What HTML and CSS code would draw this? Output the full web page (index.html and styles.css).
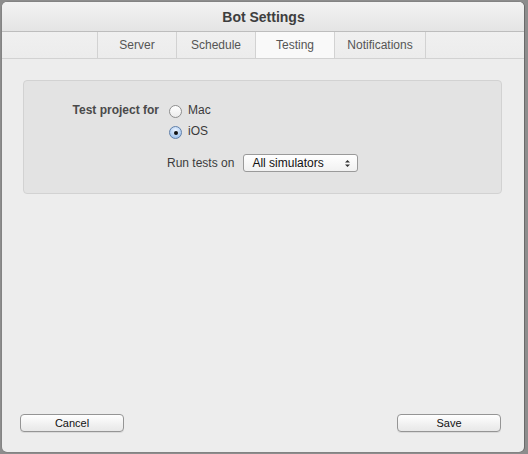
FILE: index.html
```html
<!DOCTYPE html>
<html>
<head>
<meta charset="utf-8">
<link rel="stylesheet" href="styles.css">
</head>
<body>
<div class="window">
  <div class="titlebar">Bot Settings</div>
  <div class="tabbar">
    <div class="tabs">
      <div class="tab">Server</div>
      <div class="tab">Schedule</div>
      <div class="tab active">Testing</div>
      <div class="tab wide">Notifications</div>
    </div>
  </div>
  <div class="content">
    <div class="group">
      <div class="row row-first">
        <div class="label">Test project for</div>
        <div class="radio"></div>
        <div class="opt">Mac</div>
      </div>
      <div class="row row-second">
        <div class="radio checked"><span class="dot"></span></div>
        <div class="opt">iOS</div>
      </div>
      <div class="row row-third">
        <div class="plain">Run tests on</div>
        <div class="popup">
          <span>All simulators</span>
          <svg class="arrows" width="7" height="9" viewBox="0 0 7 9"><path d="M1 3.5 L3.5 1 L6 3.5 Z M1 5.5 L3.5 8 L6 5.5 Z" fill="#333"/></svg>
        </div>
      </div>
    </div>
    <div class="footer">
      <button class="btn">Cancel</button>
      <button class="btn">Save</button>
    </div>
  </div>
</div>
</body>
</html>
```
FILE: styles.css
```css
html, body {
  margin: 0;
  padding: 0;
}
body {
  background: #8d8d8d;
  width: 528px;
  height: 454px;
  overflow: hidden;
  font-family: "Liberation Sans", Arial, sans-serif;
}
.window {
  box-sizing: border-box;
  margin: 2px 0 0 2px;
  width: 522px;
  height: 450px;
  background: #ededed;
  border-radius: 5px;
  overflow: hidden;
  display: flex;
  flex-direction: column;
  box-shadow: 1px 0 0 #6a6a6a, 0 0 0 0.5px #7a7a7a;
}
.titlebar {
  height: 29px;
  border-bottom: 1px solid #bdbdbd;
  background: linear-gradient(#f3f3f3, #e4e4e4);
  display: flex;
  align-items: center;
  justify-content: center;
  font-weight: bold;
  font-size: 14px;
  color: #3e3e3e;
  padding-left: 1px;
}
.tabbar {
  height: 26px;
  border-bottom: 1px solid #d2d2d2;
  background: linear-gradient(#f0f0f0, #ececec);
  display: flex;
  padding-left: 95px;
}
.tabs {
  display: flex;
  border-left: 1px solid #d2d2d2;
}
.tab {
  width: 78px;
  border-right: 1px solid #d2d2d2;
  display: flex;
  align-items: center;
  justify-content: center;
  font-size: 12px;
  color: #555555;
}
.tab.wide {
  width: 90px;
}
.tab.active {
  background: #f9f9f9;
}
.content {
  flex: 1;
  display: flex;
  flex-direction: column;
  padding: 21px 22px 20px 21px;
}
.group {
  box-sizing: border-box;
  height: 114px;
  background: #e3e3e3;
  border: 1px solid #d2d2d2;
  border-radius: 4px;
  padding-top: 24px;
}
.row {
  display: flex;
  align-items: center;
  font-size: 12px;
  color: #3c3c3c;
}
.row-first {
  height: 13px;
}
.row-second {
  height: 13px;
  margin-top: 8px;
  padding-left: 145px;
}
.row-third {
  height: 18px;
  margin-top: 15px;
  padding-left: 143px;
}
.label {
  width: 135px;
  text-align: right;
  font-weight: bold;
  color: #4a4a4a;
  margin-right: 10px;
  padding-bottom: 3px;
}
.radio {
  box-sizing: border-box;
  width: 13px;
  height: 13px;
  border-radius: 50%;
  border: 1px solid #8e8e8e;
  background: linear-gradient(#ffffff, #ececec);
  display: flex;
  align-items: center;
  justify-content: center;
}
.radio.checked {
  border-color: #6080aa;
  background: radial-gradient(circle at 50% 30%, #eaf3ff, #a9c9ef 70%, #8fb6e6);
}
.dot {
  width: 4px;
  height: 4px;
  border-radius: 50%;
  background: #111;
}
.opt {
  margin-left: 6px;
  color: #3a3a3a;
  padding-bottom: 3px;
}
.plain {
  color: #3c3c3c;
  margin-right: 9px;
}
.popup {
  box-sizing: border-box;
  width: 115px;
  height: 18px;
  border: 1px solid #9a9a9a;
  border-radius: 3px;
  background: linear-gradient(#ffffff, #f1f1f1);
  display: flex;
  align-items: center;
  justify-content: space-between;
  padding: 0 6px 0 8px;
  font-size: 12px;
  color: #111;
}
.footer {
  margin-top: auto;
  display: flex;
  justify-content: space-between;
  margin-left: -3px;
  margin-right: 1px;
}
.btn {
  box-sizing: border-box;
  width: 104px;
  height: 18px;
  border: 1px solid #959595;
  border-radius: 4px;
  background: linear-gradient(#ffffff, #f0f0f0 60%, #e8e8e8);
  font-family: "Liberation Sans", Arial, sans-serif;
  font-size: 11px;
  color: #111;
  padding: 0;
  box-shadow: 0 1px 0 rgba(0,0,0,0.08);
}
```
